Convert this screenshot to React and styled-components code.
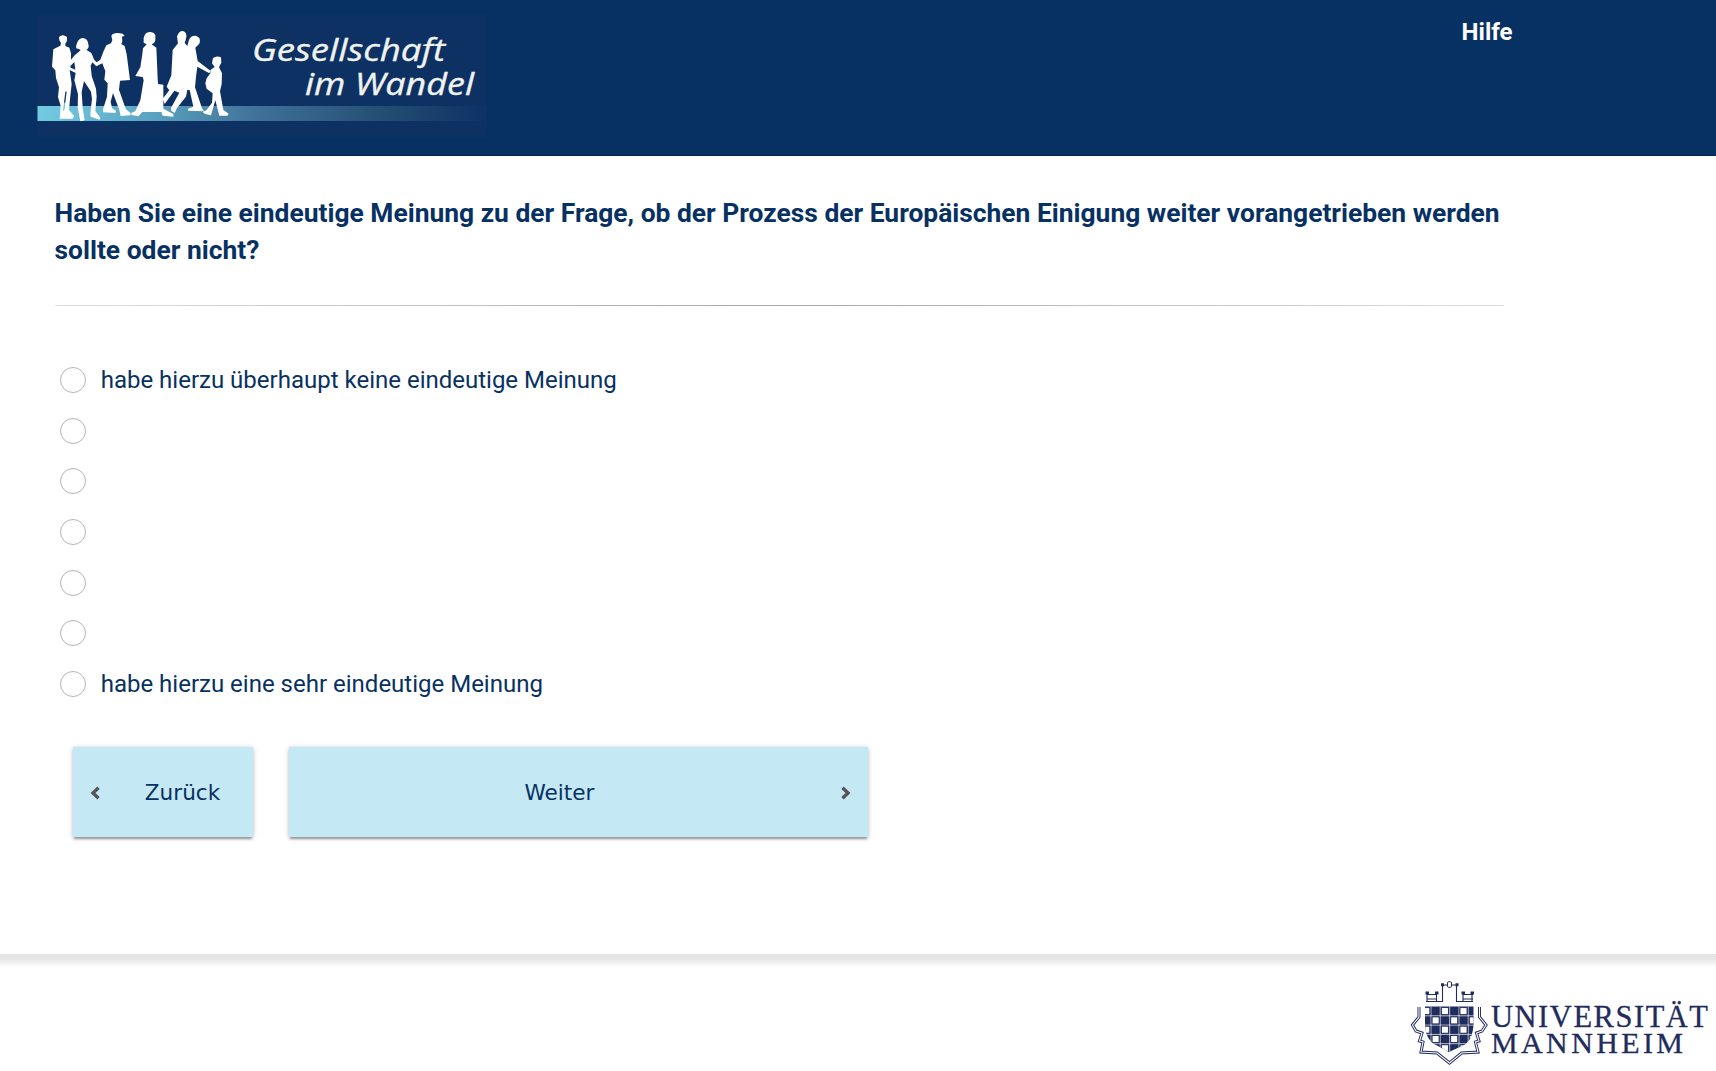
import React from "react";
import styled, { createGlobalStyle } from "styled-components";

const navy = "#083163";
const crestNavy = "#1f2c5c";

const GlobalStyle = createGlobalStyle`
  *, *::before, *::after { box-sizing: border-box; }
  html, body { margin: 0; padding: 0; background: #fff; }
  body { font-family: Roboto, "Liberation Sans", sans-serif; color: ${navy}; overflow: hidden; }
`;

const Page = styled.div`
  display: flex;
  flex-direction: column;
  width: 100%;
  height: 1071px;
`;

const Header = styled.header`
  display: flex;
  justify-content: space-between;
  height: 156px;
  flex: none;
  padding: 15px 203.5px 0 37px;
  background: ${navy};
  border-bottom: 1px solid #04244f;
`;

const StudyLogo = styled.svg`
  display: block;
  width: 450px;
  height: 122px;
`;

const HelpLink = styled.a`
  font-size: 24px;
  line-height: 34px;
  font-weight: 700;
  color: #fff;
  text-decoration: none;
`;

const Main = styled.main`
  display: flex;
  flex-direction: column;
  flex: none;
  height: 798px;
  padding: 39px 212px 0 54.5px;
`;

const Question = styled.h1`
  margin: 0;
  font-size: 26.4px;
  line-height: 37px;
  font-weight: 700;
`;

const Divider = styled.hr`
  width: 100%;
  height: 1px;
  margin: 36px 0 0;
  border: 0;
  background: linear-gradient(to right, #dedede, #a6a6a6 50%, #dedede);
`;

const Options = styled.div`
  display: grid;
  grid-auto-rows: 50.6px;
  margin: 48.9px 0 0 5.5px;
`;

const Option = styled.label`
  display: flex;
  align-items: center;
  gap: 14.7px;
  font-size: 24px;
`;

const Radio = styled.input`
  appearance: none;
  flex: none;
  width: 26px;
  height: 26px;
  margin: 0;
  border: 1px solid #b5b5b5;
  border-radius: 50%;
  background: #fff;
`;

const Actions = styled.div`
  display: flex;
  gap: 36px;
  margin: 37.9px 0 0 18.5px;
`;

const ActionButton = styled.button`
  display: flex;
  align-items: center;
  width: ${(p) => p.$width}px;
  height: 90px;
  padding: 2px 17px 0;
  border: 0;
  background: #c5e8f5;
  box-shadow: 0 3px 2px -1px rgba(0, 0, 0, 0.3), 0 1px 5px rgba(0, 0, 0, 0.26);
  font-family: "DejaVu Sans", sans-serif;
  font-size: 21.6px;
  color: ${navy};
`;

const ActionLabel = styled.span`
  flex: 1;
  padding: ${(p) => p.$padding};
  text-align: center;
`;

const Chevron = styled.svg`
  flex: none;
  width: 10px;
  height: 14px;
  fill: none;
  stroke: #555;
  stroke-width: 3.4;
`;

const Footer = styled.footer`
  display: flex;
  justify-content: flex-end;
  flex: 1;
  padding-right: 6px;
  background: linear-gradient(#e4e4e4 0, #e8e8e8 6px, #fff 13px);
`;

const UniversityLogo = styled.svg`
  display: block;
  width: 300px;
  height: 90px;
  margin-top: 26px;
`;

function Gesellschaft() {
  return (
    <StudyLogo viewBox="37 15 450 122" role="img" aria-label="Gesellschaft im Wandel">
      <defs>
        <linearGradient id="band">
          <stop offset="0" stopColor="#72cbe2" />
          <stop offset="0.2" stopColor="#60adc9" />
          <stop offset="0.5" stopColor="#3f7097" />
          <stop offset="0.8" stopColor="#214a70" />
          <stop offset="1" stopColor="#0f3165" />
        </linearGradient>
      </defs>
      <rect x="37" y="15" width="450" height="122" fill="#0e3164" />
      <rect x="37.5" y="106" width="449" height="15" fill="url(#band)" />
      <g transform="translate(30 10) scale(.33333)" fill="#fff">
        <path d="M87 81Q98 71 111 81L111 93L106 101V108L118 113L123 130V149L134 136L145 127L152 120L145 116Q136 118 139 106Q143 86 157 84Q174 85 175 103Q179 115 169 119L184 129L193 150L200 157L211 149L220 125L229 106L243 100L247 91L244 77Q249 68 264 69L278 71L284 77L276 80L277 94L274 102L284 108L290 133L300 210L270 212L267 239L282 282L288 298L302 310L301 316L272 318L268 300L249 249L242 275L246 294L258 303L256 309L219 307L219 298L231 260L233 220L223 209L226 184L217 160L199 169L187 157L182 167L185 198L198 236L200 260L196 303L211 323L209 329L182 320L181 310L186 267L183 245L162 213L155 246L158 293L164 331L151 334L143 293L144 253L133 211L137 189L119 180L125 222L120 267L117 300L132 318L128 326L89 326L92 288L84 261L87 232L78 204L76 181L66 170L70 118L91 107L93 99L88 91Z" />
        <path fill="#0f3165" d="M121 168L133 156L136 179L122 173ZM106 245L110 244L106 278L102 278Z" />
        <path fill="#66bdd5" d="M102 278H106L103 300L99 303Z" />
        <path d="M341 84Q345 65 360 66Q379 67 376 84Q378 98 365 103L379 113L383 205L384 222L400 224L400 296L430 312L430 320L398 317L394 306H337L325 319L304 315L304 309L316 303L331 271L341 211L338 201L316 198L331 172L337 132L339 115L350 103L341 98Z" />
        <path d="M444 100L441 80Q446 62 459 63Q473 67 468 87L464 99L474 110L482 130L490 200L481 241L472 239L468 260L441 294L434 309L424 303L423 294L448 248L433 242L404 282L398 266L418 241L410 230L424 196L428 120Z" />
        <path d="M477 90Q482 76 497 77Q515 82 508 101L496 113L503 153L541 182L538 190L502 170L498 200L495 232L516 295L522 304L474 302L474 296L490 290L479 240L465 215L470 115Z" />
        <path d="M546 160L549 144Q560 136 573 142L574 158L567 171L576 190L575 222L570 244L580 300L596 311L593 317L568 317L556 271L543 316L525 312L518 306L529 301L546 278L548 250L530 236L526 220L530 205L541 190L541 180L554 171Z" />
      </g>
      <g fill="#f1f3ef" stroke="#f1f3ef" strokeWidth=".35" fontFamily="'Open Sans', 'Noto Sans', sans-serif" fontStyle="italic" fontSize="31.5">
        <text x="252" y="60.5" textLength="193" lengthAdjust="spacingAndGlyphs">Gesellschaft</text>
        <text x="305" y="94.7" textLength="169" lengthAdjust="spacingAndGlyphs">im Wandel</text>
      </g>
    </StudyLogo>
  );
}

const checks = [0, 1, 2, 3, 4, 5];

function Mannheim() {
  return (
    <UniversityLogo viewBox="1410 980 300 90" role="img" aria-label="Universität Mannheim">
      <defs>
        <clipPath id="shield">
          <path d="M1425 1006.5H1473.5V1022Q1473.5 1041 1462 1046L1449 1052L1436 1045Q1425 1040 1425 1022Z" />
        </clipPath>
      </defs>
      <g clipPath="url(#shield)">
        <rect x="1425" y="1006" width="50" height="48" fill={crestNavy} />
        <path d="M1431 1006v46M1440.2 1006v46M1449.7 1006v46M1459 1006v46M1468.2 1006v46M1424 1015.8h50M1424 1025.1h50M1424 1034.4h50M1424 1043.7h50" stroke="#fff" strokeWidth=".7" />
        {checks.map((row) =>
          checks.map((col) =>
            (row + col) % 2 === 0 ? (
              <rect key={`${row}-${col}`} x={1422.8 + col * 9.3} y={1007.6 + row * 9.3} width="7" height="7" fill="#fff" stroke={crestNavy} strokeWidth=".9" />
            ) : null
          )
        )}
      </g>
      <g fill="none" stroke={crestNavy}>
        <path strokeWidth="1.1" d="M1426 1001.5H1442.5V985H1447M1452 985H1456.5V1001.5H1473M1427 992V1001M1436.5 992V1001M1463 992V1001M1472 992V1001M1427 994.5H1437M1463 994.5H1473M1427 999H1437M1463 999H1473" />
        <rect x="1447.5" y="981.8" width="4" height="5.5" rx="1" />
        <path strokeWidth="3" d="M1425.5 993h3.5M1435 993h3.5M1461.5 993h3.5M1470.5 993h3.5M1441 984.8h3M1455.5 984.8h3" />
        <path strokeWidth="3" d="M1419 1007V1017L1412.5 1025L1416 1031L1422 1033L1419.5 1041L1423 1042L1421 1052L1437 1053L1449.5 1063L1461.5 1053L1478 1052L1475.5 1042L1479 1041L1476.5 1033L1482 1031L1486 1025L1479.5 1017V1007" />
        <path stroke="#fff" strokeWidth="1.1" d="M1419 1006V1017L1412.5 1025L1416 1031L1422 1033L1419.5 1041L1423 1042L1421 1052L1437 1053L1449.5 1063L1461.5 1053L1478 1052L1475.5 1042L1479 1041L1476.5 1033L1482 1031L1486 1025L1479.5 1017V1006" />
      </g>
      <g fill={crestNavy} stroke={crestNavy} strokeWidth=".3" fontFamily="'Liberation Serif', serif">
        <text x="1491" y="1027" fontSize="30.5" textLength="217" lengthAdjust="spacing">UNIVERSITÄT</text>
        <text x="1491" y="1053.3" fontSize="30" textLength="192" lengthAdjust="spacing">MANNHEIM</text>
      </g>
    </UniversityLogo>
  );
}

const options = [
  "habe hierzu überhaupt keine eindeutige Meinung",
  "",
  "",
  "",
  "",
  "",
  "habe hierzu eine sehr eindeutige Meinung",
];

export default function App() {
  return (
    <Page>
      <GlobalStyle />
      <Header>
        <Gesellschaft />
        <HelpLink>Hilfe</HelpLink>
      </Header>
      <Main>
        <Question>
          Haben Sie eine eindeutige Meinung zu der Frage, ob der Prozess der Europäischen Einigung weiter vorangetrieben werden sollte oder nicht?
        </Question>
        <Divider />
        <Options>
          {options.map((label, i) => (
            <Option key={i}>
              <Radio type="radio" name="meinung" />
              {label}
            </Option>
          ))}
        </Options>
        <Actions>
          <ActionButton $width={180}>
            <Chevron viewBox="0 0 10 14"><path d="M8.5 1.8L3 7L8.5 12.2" /></Chevron>
            <ActionLabel $padding="0 0 0 29px">Zurück</ActionLabel>
          </ActionButton>
          <ActionButton $width={579}>
            <ActionLabel $padding="0 28px 0 0">Weiter</ActionLabel>
            <Chevron viewBox="0 0 10 14"><path d="M1.5 1.8L7 7L1.5 12.2" /></Chevron>
          </ActionButton>
        </Actions>
      </Main>
      <Footer>
        <Mannheim />
      </Footer>
    </Page>
  );
}
